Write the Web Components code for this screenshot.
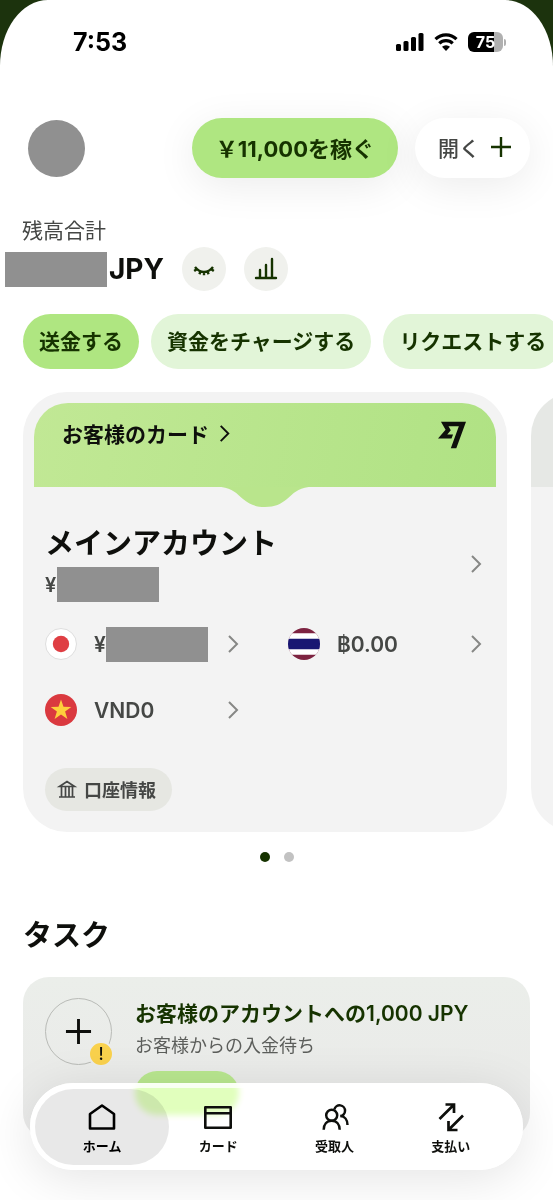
<!DOCTYPE html>
<html lang="ja">
<head>
<meta charset="utf-8">
<meta name="viewport" content="width=device-width, initial-scale=1">
<title>ホーム</title>
<style>
  html { background: #1c330d; }
  body {
    margin: 0;
    font-family: Inter, "Noto Sans CJK JP", sans-serif;
    color: #0e0f0c;
    --forest: #163300;
    --lime: #afe681;
    --mint: #e2f5d8;
    --grey: #454745;
    --mask: #909090;
  }
</style>
</head>
<body>
<account-app></account-app>

<script>
const define = (name, html, setup) => {
  const template = document.createElement('template');
  template.innerHTML = html;
  customElements.define(name, class extends HTMLElement {
    connectedCallback() {
      if (this.shadowRoot) return;
      this.attachShadow({ mode: 'open' }).append(template.content.cloneNode(true));
      if (setup) setup(this, this.shadowRoot);
    }
  });
};

const ICONS = {
  plus: ['0 0 22 22', '<path d="M11 1v20M1 11h20" stroke-width="2.4"/>'],
  bigplus: ['0 0 28 28', '<path d="M14 1v26M1 14h26" stroke-width="3"/>'],
  eye: ['0 0 22 22', '<path d="M2 9c2.600 3.300 5.600 5 9 5s6.400-1.700 9-5M4 11l-2.800 2M7.600 13.300l-1.200 3M11 14v3.200M14.400 13.300l1.200 3M18 11l2.800 2" stroke-width="2.400"/>'],
  chart: ['0 0 22 22', '<path d="M1 20h20M5 20v-8M11 20V7M17 20V1" stroke-width="2.400" stroke-linecap="round"/>'],
  chevron: ['0 0 20 20', '<path d="M6 2l8 8-8 8" stroke-width="2"/>'],
  bank: ['0 0 18 18', '<path d="M1 17h16M3.500 17V7M7.500 17V7M11 17V7M14.500 17V7M1.500 6.500L9 1.500l7.500 5z" stroke-width="1.700"/>'],
  wise: ['0 0 24 24', '<path fill="currentColor" stroke="none" d="M6.488 7.469L0 15.050h11.585l1.301-3.576H7.922l3.033-3.507.010-.092L8.993 4.480h8.873l-6.878 18.925h4.706L24 .595H2.543l3.945 6.874z"/>'],
  home: ['0 0 28 28', '<path d="M2 11L14 2.500 26 11v14.500H2z" stroke-width="2.600" stroke-linejoin="round"/>'],
  card: ['0 0 28 28', '<path d="M1.300 4.300h25.400v20.400H1.300zM1.300 10.200h25.400" stroke-width="2.600" stroke-linejoin="round"/>'],
  people: ['0 0 28 28', '<circle cx="10.700" cy="12.200" r="5.500"/><path d="M2.700 26.800c0-5.400 3-9 8-9s8 3.600 8 9M13.400 6.400a5.400 5.400 0 1 1 5.800 6.700M19.200 13.100c4.600.2 7.300 3.700 7.300 9"/>'],
  transfer: ['0 0 28 28', '<path d="M2.500 16L17.300 1.200M8.500 1.500h8.500v8.500M26 12.500L11.200 27.300M11.500 18v9h9" stroke-width="2.700"/>'],
  signal: ['0 0 28 18', '<g fill="currentColor" stroke="none"><rect y="11" width="5" height="7" rx="1.500"/><rect x="7.500" y="8" width="5" height="10" rx="1.500"/><rect x="15" y="4" width="5" height="14" rx="1.500"/><rect x="22.500" width="5" height="18" rx="1.500"/></g>'],
  wifi: ['0 0 24 18', '<path d="M1.500 6.200a15 15 0 0 1 21 0M5.300 10.300a9.600 9.600 0 0 1 13.400 0" stroke-width="3.200"/><path fill="currentColor" stroke="none" d="M12 18l-4-4.200a5.800 5.800 0 0 1 8 0z"/>'],
  jp: ['0 0 32 32', '<circle cx="16" cy="16" r="15.500" fill="#fff" stroke="#dedede" stroke-width="1"/><circle cx="16" cy="16" r="8.200" fill="#df3e43" stroke="none"/>'],
  vn: ['0 0 32 32', '<g stroke="none"><circle cx="16" cy="16" r="16" fill="#da393f"/><path fill="#fecf3c" d="M16 5.500l2.500 7.300 7.800.1-6.200 4.700 2.300 7.500-6.400-4.500-6.400 4.500 2.300-7.500-6.200-4.700 7.800-.1z"/></g>'],
  th: ['0 0 32 32', '<g stroke="none"><clipPath id="r"><circle cx="16" cy="16" r="16"/></clipPath><g clip-path="url(#r)"><path fill="#7d2341" d="M0 0h32v32H0z"/><path fill="#fff" d="M0 5.300h32v21.400H0z"/><path fill="#181672" d="M0 10.700h32v10.600H0z"/></g></g>']
};

define('ui-icon', `
<style>
  :host { display: block; flex: none; width: 20px; height: 20px; }
  svg { display: block; width: 100%; height: 100%; fill: none; stroke: currentColor; stroke-width: 2.500; overflow: visible; }
</style>
<svg aria-hidden="true"></svg>`, (host, root) => {
  const [box, markup] = ICONS[host.getAttribute('name')];
  const svg = root.querySelector('svg');
  svg.setAttribute('viewBox', box);
  svg.innerHTML = markup;
});

define('masked-value', `
<style>:host { display: block; flex: none; width: 102px; height: 35px; background: var(--mask); }</style>`);

define('status-bar', `
<style>
  :host { display: flex; align-items: center; justify-content: space-between; height: 84px; padding: 0 47px 0 73px; color: #000; font-size: 25px; font-weight: 700; }
  .right { display: flex; align-items: center; gap: 10px; }
  .signal { width: 28px; height: 18px; }
  .wifi { width: 24px; height: 18px; }
  .battery { display: flex; align-items: center; gap: 1px; }
  .level { width: 35px; height: 20px; border-radius: 6px; background: linear-gradient(90deg, #000 75%, #b0b0b0 75%); color: #fff; font-size: 16px; line-height: 20px; text-align: center; }
  .cap { width: 2px; height: 7px; border-radius: 0 2px 2px 0; background: #b0b0b0; }
</style>
<span>7:53</span>
<div class="right">
  <ui-icon class="signal" name="signal"></ui-icon>
  <ui-icon class="wifi" name="wifi"></ui-icon>
  <div class="battery"><div class="level">75</div><div class="cap"></div></div>
</div>`);

define('pill-button', `
<style>
  :host { display: block; flex: none; }
  button { display: flex; align-items: center; gap: 10px; height: 55px; padding: 0 16px 3px; border: 0; border-radius: 28px; background: var(--mint); color: var(--forest); font: inherit; font-size: 21px; font-weight: 600; white-space: nowrap; }
  :host([kind="primary"]) button, :host([kind="earn"]) button { background: var(--lime); }
  :host([kind="earn"]) button, :host([kind="open"]) button { height: 60px; padding: 0 24px 3px; border-radius: 30px; box-shadow: 0 8px 40px rgba(0,0,0,.08); }
  :host([kind="earn"]) button { font-size: 22px; font-weight: 700; }
  :host([kind="open"]) button { padding: 0 18px 3px 23px; background: #fff; color: var(--grey); font-weight: 500; }
  :host([kind="small"]) button { gap: 8px; height: 43px; padding: 0 16px 1px 13px; background: #e6e7e2; color: var(--grey); font-size: 18px; }
</style>
<button type="button"><slot></slot></button>`);

define('round-button', `
<style>
  :host { display: block; flex: none; }
  button { display: grid; place-items: center; width: 44px; height: 44px; padding: 0; border: 0; border-radius: 50%; background: #f0f1ed; color: var(--forest); }
</style>
<button type="button"><slot></slot></button>`, (host, root) => {
  root.querySelector('button').setAttribute('aria-label', host.getAttribute('label'));
});

define('app-header', `
<style>
  :host { display: flex; align-items: center; padding: 34px 23px 0 28px; }
  .avatar { width: 57px; height: 57px; padding: 0; border: 0; border-radius: 50%; background: var(--mask); }
  .actions { display: flex; gap: 17px; margin-left: auto; }
  ui-icon { color: var(--forest); width: 22px; height: 22px; }
</style>
<button class="avatar" type="button" aria-label="プロフィール"></button>
<div class="actions">
  <pill-button kind="earn">￥11,000を稼ぐ</pill-button>
  <pill-button kind="open">開く<ui-icon name="plus"></ui-icon></pill-button>
</div>`);

define('total-balance', `
<style>
  :host { display: block; padding-top: 38px; }
  .label { margin: 0; padding-left: 22px; font-size: 21px; line-height: 30px; font-weight: 400; color: var(--grey); }
  .row { display: flex; align-items: center; gap: 18px; margin-top: 1px; padding-left: 5px; }
  .amount { display: flex; align-items: center; gap: 2px; font-size: 28px; font-weight: 700; }
  ui-icon { width: 22px; height: 22px; }
</style>
<h2 class="label">残高合計</h2>
<div class="row">
  <div class="amount"><masked-value></masked-value><span>JPY</span></div>
  <round-button label="残高を隠す"><ui-icon name="eye"></ui-icon></round-button>
  <round-button label="グラフ"><ui-icon name="chart"></ui-icon></round-button>
</div>`);

define('scroll-row', `
<style>
  :host { display: flex; overflow-x: auto; scrollbar-width: none; padding: 0 23px; margin-top: 23px; gap: var(--gap, 12px); }
</style>
<slot></slot>`);

define('currency-balance', `
<style>
  :host { display: block; }
  a { display: flex; align-items: center; height: 36px; color: var(--grey); text-decoration: none; font-size: 21px; font-weight: 600; }
  .flag { width: 32px; height: 32px; margin-right: 17px; }
  .value { display: flex; align-items: center; flex: 1; }
  .go { color: #868785; }
</style>
<a href="#"><span class="value"><slot></slot></span><ui-icon class="go" name="chevron"></ui-icon></a>`, (host, root) => {
  const flag = document.createElement('ui-icon');
  flag.className = 'flag';
  flag.setAttribute('name', host.getAttribute('flag'));
  root.querySelector('a').prepend(flag);
});

define('balance-card', `
<style>
  :host { display: block; flex: none; box-sizing: border-box; width: calc(100% - 23px); padding: 11px 11px 21px; border-radius: 44px; background: #f3f3f3; }
  .panel { position: relative; display: flex; justify-content: space-between; box-sizing: border-box; height: 84px; padding: 14px 30px 0 28px; border-radius: 34px 34px 0 0; background: linear-gradient(100deg, #c1e895, #b0e284); }
  .panel a { display: flex; align-items: center; gap: 6px; height: 32px; color: #0e0f0c; text-decoration: none; font-size: 21px; font-weight: 600; }
  .chev { width: 19px; height: 19px; }
  .logo { width: 28px; height: 28px; margin-top: 4px; }
  .bump { position: absolute; top: 100%; left: 50%; width: 104px; height: 20px; margin-left: -52px; fill: #b9e58c; }
  .body { padding: 39px 10px 0 11px; }
  .main { display: flex; align-items: center; justify-content: space-between; color: inherit; text-decoration: none; }
  h3 { margin: 0 0 5px; font-size: 29px; line-height: 36px; font-weight: 600; }
  .sum { display: flex; align-items: center; gap: 1px; color: var(--grey); font-size: 20px; font-weight: 600; }
  .go { color: #868785; }
  .grid { display: grid; grid-template-columns: 1fr 1fr; gap: 30px 45px; margin: 24px 0 40px; }
  .details { display: flex; }
  .details ui-icon { width: 18px; height: 18px; }
</style>
<div class="panel">
  <a href="#">お客様のカード<ui-icon class="chev" name="chevron"></ui-icon></a>
  <ui-icon class="logo" name="wise"></ui-icon>
  <svg class="bump" viewBox="0 0 104 20" aria-hidden="true"><path d="M0-.5C18-.5 22 5 30 12C36 17 42 20 52 20S68 17 74 12C82 5 86-.5 104-.5Z"/></svg>
</div>
<div class="body">
  <a class="main" href="#">
    <div><h3>メインアカウント</h3><div class="sum">¥<masked-value></masked-value></div></div>
    <ui-icon class="go" name="chevron"></ui-icon>
  </a>
  <div class="grid">
    <currency-balance flag="jp">¥<masked-value></masked-value></currency-balance>
    <currency-balance flag="th">฿0.00</currency-balance>
    <currency-balance flag="vn">VND0</currency-balance>
  </div>
  <div class="details"><pill-button kind="small"><ui-icon name="bank"></ui-icon>口座情報</pill-button></div>
</div>`);

define('next-card', `
<style>
  :host { display: block; flex: none; width: calc(100% - 23px); border-radius: 44px; background: linear-gradient(#e6e8e5 95px, #f3f3f3 95px); }
</style>`);

define('page-dots', `
<style>
  :host { display: flex; justify-content: center; gap: 14px; margin-top: 20px; }
  i { width: 10px; height: 10px; border-radius: 50%; background: #c2c2c2; }
  i:first-of-type { background: var(--forest); }
</style>
<i></i><i></i>`);

define('task-list', `
<style>
  :host { display: block; padding: 54px 23px 0; }
  h2 { margin: 0 0 21px; font-size: 29px; line-height: 40px; font-weight: 600; }
  article { display: flex; gap: 23px; padding: 21px 22px 24px; border-radius: 26px; background: linear-gradient(#ebeeea, #eaebe9 60%, #ebebeb); }
  .icon { position: relative; display: grid; place-items: center; box-sizing: border-box; width: 67px; height: 67px; border: 1px solid #b9bbb7; border-radius: 50%; }
  .icon ui-icon { width: 27px; height: 27px; }
  .badge { position: absolute; right: -3px; bottom: -3px; width: 22px; height: 22px; border: 2px solid #ebecea; border-radius: 50%; background: #f9d14d; font-size: 17px; font-weight: 500; line-height: 22px; text-align: center; }
  h3 { margin: 0; font-size: 21px; line-height: 32px; font-weight: 600; color: var(--forest); }
  p { margin: 1px 0 10px; font-size: 18px; line-height: 30px; color: #5c5e5b; }
  button { display: block; width: 104px; height: 44px; border: 0; border-radius: 22px; background: #b9e78f; }
</style>
<h2>タスク</h2>
<article>
  <div class="icon"><ui-icon name="bigplus"></ui-icon><span class="badge">!</span></div>
  <div>
    <h3>お客様のアカウントへの1,000 JPY</h3>
    <p>お客様からの入金待ち</p>
    <button type="button" aria-label="入金する"></button>
  </div>
</article>`);

define('nav-item', `
<style>
  :host { display: block; flex: 1; margin: 0 -9px; }
  a { display: flex; flex-direction: column; align-items: center; box-sizing: border-box; height: 76px; padding-top: 14px; border-radius: 38px; color: #0e0f0c; text-decoration: none; font-size: 13px; line-height: 20px; font-weight: 600; }
  :host([active]) a { background: rgba(0,0,0,.09); color: #000; font-weight: 700; }
  ui-icon { width: 28px; height: 28px; margin-bottom: 5px; }
</style>
<a href="#"><slot></slot></a>`, (host, root) => {
  const icon = document.createElement('ui-icon');
  icon.setAttribute('name', host.getAttribute('icon'));
  root.querySelector('a').prepend(icon);
});

define('bottom-nav', `
<style>
  :host { position: fixed; left: 30px; right: 30px; bottom: 30px; display: block; }
  nav { display: flex; padding: 6px 14px 5px; border-radius: 44px; background: rgba(255,255,255,.74); -webkit-backdrop-filter: blur(3px) saturate(3) brightness(1.1); backdrop-filter: blur(3px) saturate(3) brightness(1.1); box-shadow: 0 8px 50px rgba(0,0,0,.11), inset 0 0 0 5px rgba(255,255,255,.8); }
</style>
<nav>
  <nav-item icon="home" active>ホーム</nav-item>
  <nav-item icon="card">カード</nav-item>
  <nav-item icon="people">受取人</nav-item>
  <nav-item icon="transfer">支払い</nav-item>
</nav>`);

define('account-app', `
<style>
  :host { display: block; box-sizing: border-box; min-height: 100vh; padding-bottom: 40px; border-radius: 48px 48px 0 0 / 66px 66px 0 0; background: #fff; overflow: hidden; }
  .cards { --gap: 24px; }
</style>
<status-bar></status-bar>
<app-header></app-header>
<main>
  <total-balance></total-balance>
  <scroll-row>
    <pill-button kind="primary">送金する</pill-button>
    <pill-button>資金をチャージする</pill-button>
    <pill-button>リクエストする</pill-button>
  </scroll-row>
  <scroll-row class="cards">
    <balance-card></balance-card>
    <next-card></next-card>
  </scroll-row>
  <page-dots></page-dots>
  <task-list></task-list>
</main>
<bottom-nav></bottom-nav>`);
</script>
</body>
</html>
